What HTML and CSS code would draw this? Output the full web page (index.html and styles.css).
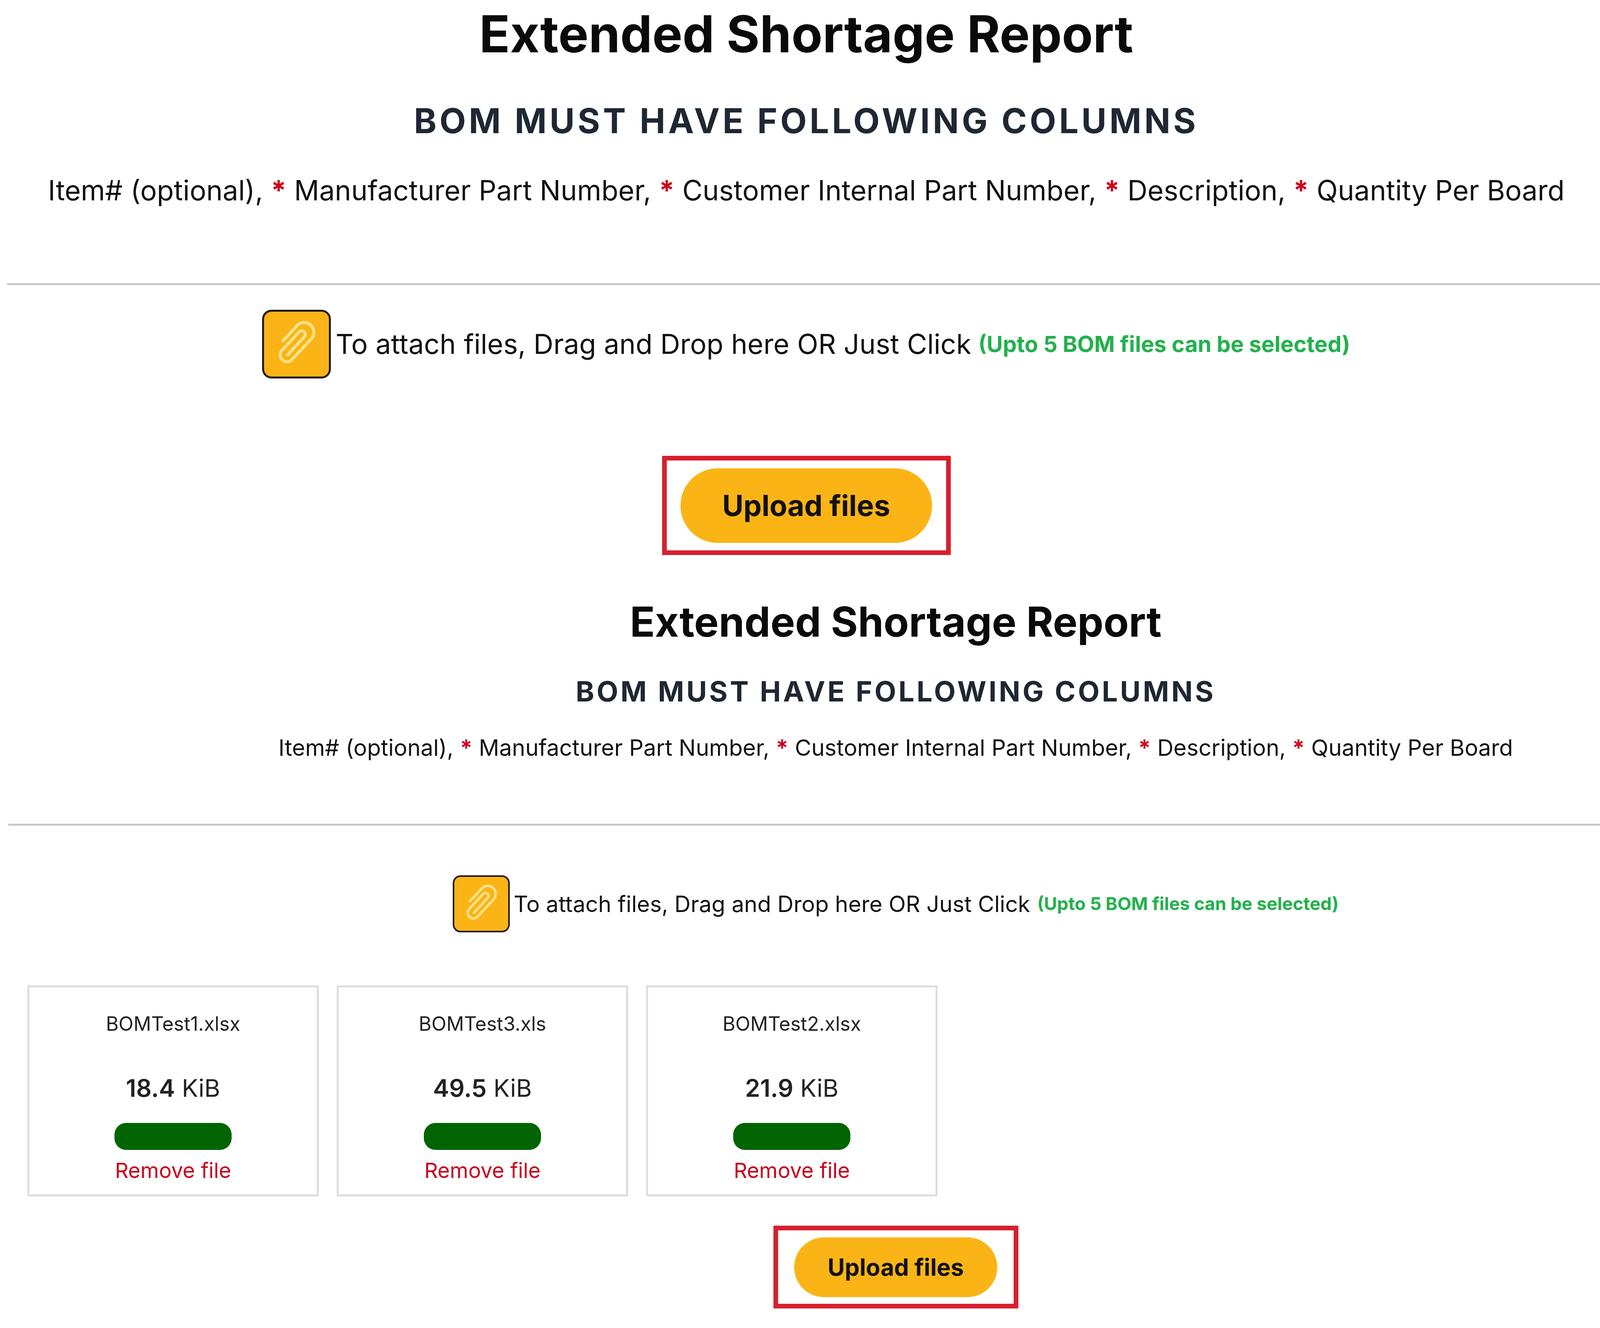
FILE: index.html
```html
<!DOCTYPE html>
<html lang="en">
<head>
<meta charset="utf-8">
<title>Extended Shortage Report</title>
<link rel="stylesheet" href="styles.css">
</head>
<body>
<section class="first">
  <h1 class="title">Extended Shortage Report</h1>
  <h2 class="sub">BOM MUST HAVE FOLLOWING COLUMNS</h2>
  <p class="cols">Item# (optional), <b>*</b> Manufacturer Part Number, <b>*</b> Customer Internal Part Number, <b>*</b> Description, <b>*</b> Quantity Per Board</p>
</section>
<hr class="rule rule-a">
<section class="first">
  <div class="attach">
    <span class="clip"><svg viewBox="0 0 100 100"><path class="clip-wire" d="M29 45 L51.600 20.800 A15 15 0 0 1 73.500 41.200 L42.500 74.400 A10.500 10.500 0 0 1 27.200 60.100 L54 31.300 A5.500 5.500 0 0 1 62.100 38.800 L36.300 66.500"/></svg></span>
    <span class="drop">To attach files, Drag and Drop here OR Just Click</span>
    <span class="limit">(Upto 5 BOM files can be selected)</span>
  </div>
  <div class="upload-box"><button class="upload">Upload files</button></div>
</section>
<section class="second">
  <h1 class="title">Extended Shortage Report</h1>
  <h2 class="sub">BOM MUST HAVE FOLLOWING COLUMNS</h2>
  <p class="cols">Item# (optional), <b>*</b> Manufacturer Part Number, <b>*</b> Customer Internal Part Number, <b>*</b> Description, <b>*</b> Quantity Per Board</p>
</section>
<hr class="rule rule-b">
<section class="second">
  <div class="attach">
    <span class="clip"><svg viewBox="0 0 100 100"><path class="clip-wire" d="M29 45 L51.600 20.800 A15 15 0 0 1 73.500 41.200 L42.500 74.400 A10.500 10.500 0 0 1 27.200 60.100 L54 31.300 A5.500 5.500 0 0 1 62.100 38.800 L36.300 66.500"/></svg></span>
    <span class="drop">To attach files, Drag and Drop here OR Just Click</span>
    <span class="limit">(Upto 5 BOM files can be selected)</span>
  </div>
</section>
<div class="cards">
  <article class="card">
    <div class="name">BOMTest1.xlsx</div>
    <div class="size"><strong>18.4</strong> KiB</div>
    <div class="bar"></div>
    <a class="remove">Remove file</a>
  </article>
  <article class="card">
    <div class="name">BOMTest3.xls</div>
    <div class="size"><strong>49.5</strong> KiB</div>
    <div class="bar"></div>
    <a class="remove">Remove file</a>
  </article>
  <article class="card">
    <div class="name">BOMTest2.xlsx</div>
    <div class="size"><strong>21.9</strong> KiB</div>
    <div class="bar"></div>
    <a class="remove">Remove file</a>
  </article>
</div>
<section class="second">
  <div class="upload-box"><button class="upload">Upload files</button></div>
</section>
</body>
</html>
```
FILE: styles.css
```css
* { box-sizing: border-box; }
html, body { margin: 0; padding: 0; background: #fff; }
body { font-family: Inter, "Liberation Sans", sans-serif; color: #111; }
h1, h2, p { margin: 0; }

.first { padding-left: 32px; text-align: center; }
.second { padding-left: 490px; text-align: center; }

.title { font-weight: 700; color: #0a0a0a; white-space: nowrap; }
.sub { font-weight: 700; color: #1f2733; white-space: nowrap; }
.cols { font-weight: 400; color: #111; white-space: nowrap; }
.cols b { color: #d0021b; font-weight: 700; }

.first .title { font-size: 130px; line-height: 174px; }
.first .sub { font-size: 88px; line-height: 100px; margin-top: 85px; letter-spacing: 7.300px; }
.first .cols { font-size: 71px; line-height: 100px; margin-top: 78px; }

.second .title { font-size: 105.700px; line-height: 140px; margin-top: 101px; }
.second .sub { font-size: 72px; line-height: 90px; margin-top: 63px; letter-spacing: 5.800px; }
.second .cols { font-size: 57.800px; line-height: 80px; margin-top: 59px; }

.rule { border: 0; height: 5px; background: #c8c8c8; margin: 0; }
.rule-a { margin-top: 188px; margin-left: 18px; }
.rule-b { margin-top: 155px; margin-left: 21px; }

.attach { display: flex; justify-content: center; align-items: center; white-space: nowrap; }
.clip { display: block; flex: none; background: #fbb415; border: 5px solid #1d1a10; border-radius: 24px; }
.clip svg { display: block; width: 100%; height: 100%; }
.clip-wire { fill: none; stroke: #fee28f; stroke-width: 4.500; stroke-linecap: round; stroke-linejoin: round; }
.limit { color: #22b14c; font-weight: 700; }

.first .attach { margin-top: 51px; height: 199px; }
.first .clip { width: 176px; height: 176px; margin-right: 12px; }
.first .drop { font-size: 70.500px; }
.first .limit { font-size: 56.500px; margin-left: 18px; }

.second .attach { margin-top: 118px; height: 163px; }
.second .clip { width: 146px; height: 146px; margin-right: 10px; border-width: 4px; border-radius: 20px; }
.second .drop { font-size: 57.300px; }
.second .limit { font-size: 45.800px; margin-left: 18px; }

.upload-box { display: flex; align-items: center; justify-content: center; border: 12px solid #d7202e; margin-left: auto; margin-right: auto; }
.upload { border: 0; background: #fbb415; color: #111; font-family: inherit; font-weight: 700; border-radius: 999px; padding: 0; }

.first .upload-box { width: 739px; height: 254px; margin-top: 187px; }
.first .upload { width: 644px; height: 191px; font-size: 74px; }
.second .upload-box { width: 627px; height: 212px; margin-top: 75px; }
.second .upload { width: 520px; height: 153px; font-size: 60px; }

.cards { display: flex; gap: 46px; padding-left: 70px; margin-top: 128px; }
.card { width: 746px; height: 540px; border: 5px solid #ddd; text-align: center; display: flex; flex-direction: column; align-items: center; }
.name { font-size: 50px; line-height: 70px; margin-top: 58px; color: #222; }
.size { font-size: 62px; line-height: 90px; margin-top: 85px; color: #222; }
.size strong { font-weight: 600; }
.bar { width: 300px; height: 69px; background: #006400; border-radius: 30px; margin-top: 44px; flex: none; }
.remove { font-size: 54px; line-height: 70px; color: #c8001c; margin-top: 18px; }
```
